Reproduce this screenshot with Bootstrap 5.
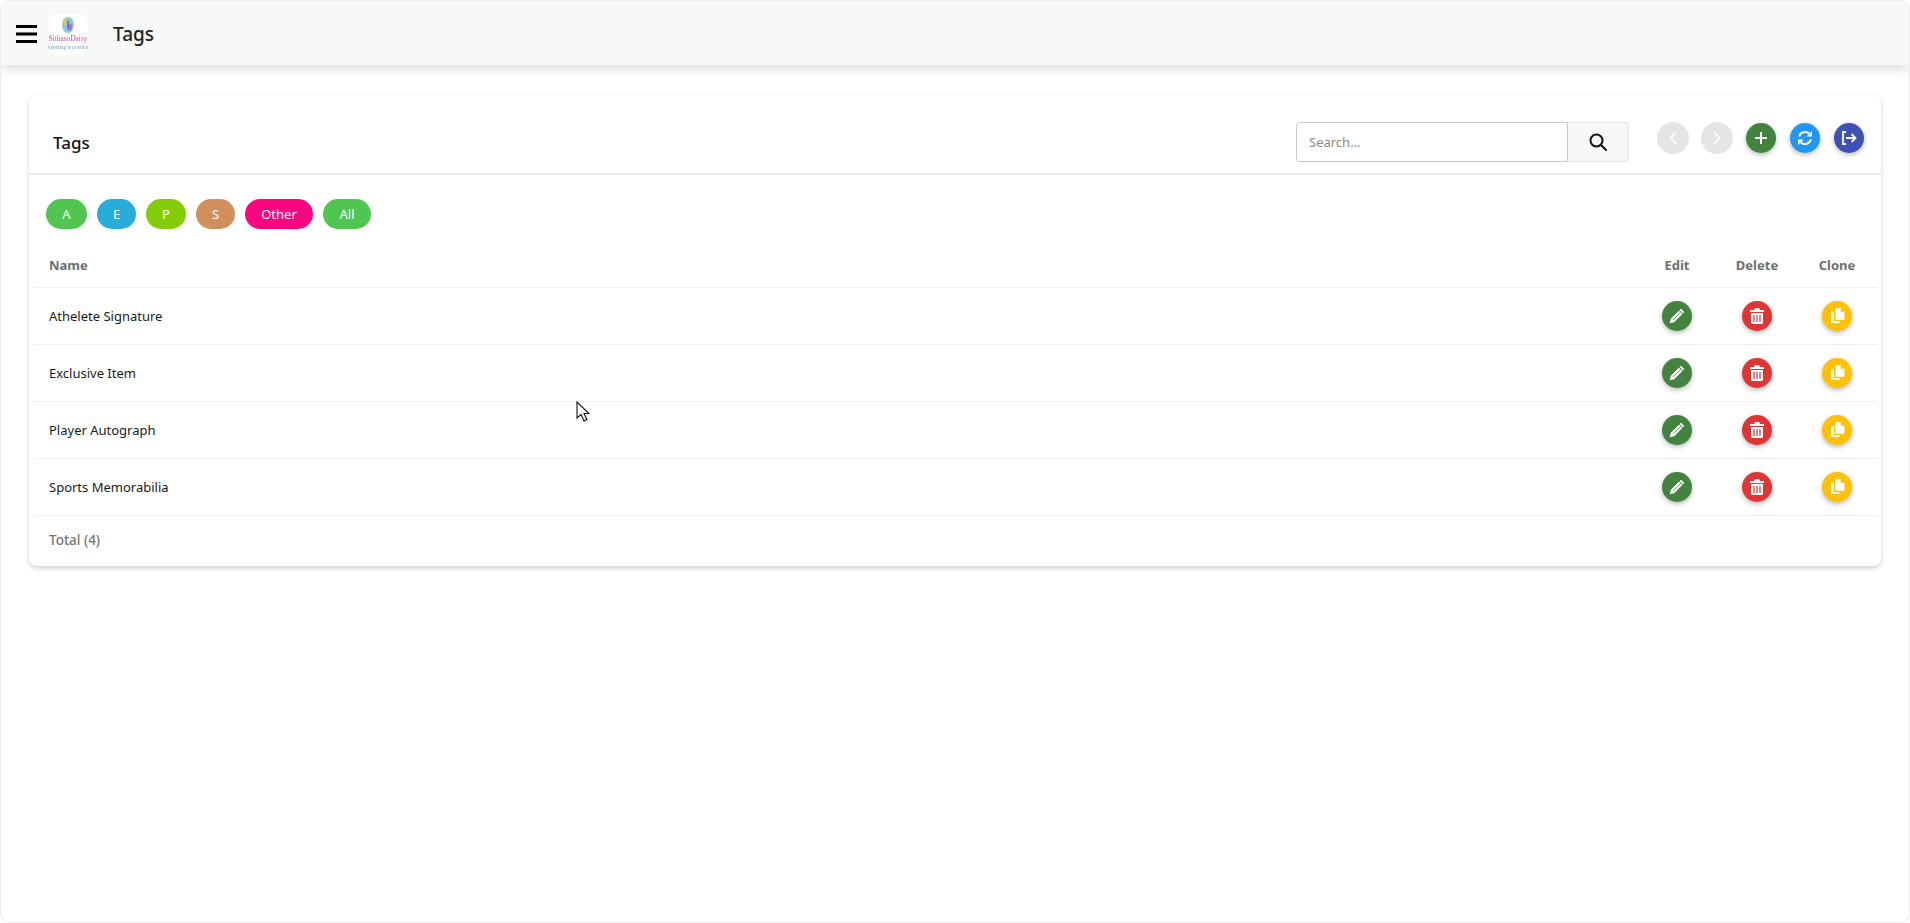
<!DOCTYPE html>
<html lang="en">
<head>
    <meta charset="UTF-8">
    <title>Tags</title>
    <link href="https://cdn.jsdelivr.net/npm/bootstrap@5.3.0/dist/css/bootstrap.min.css" rel="stylesheet">
    <style>
        html, body { height: 100%; }
        body {
            font-family: "Noto Sans", "Open Sans", sans-serif;
            color: #1a1a1a;
            background: #fff;
            font-size: 13px;
        }
        .app-frame {
            min-height: 100%;
            border: 1px solid #ececec;
            border-radius: 9px;
            overflow: hidden;
            position: relative;
        }
        .top-bar {
            height: 64px;
            background: #f8f8f8;
            box-shadow: 0 3px 12px rgba(0, 0, 0, .16);
            padding-left: 15px;
            padding-top: 1px;
        }
        .burger { width: 21px; height: 18px; display: block; }
        .logo-box {
            width: 40px;
            height: 40px;
            margin-left: 11px;
            background: #fff;
            border-radius: 9px;
        }
        .logo-box svg { filter: blur(.35px); }
        .bar-title { font-size: 19px; font-weight: 500; margin-left: 25px; padding-top: 2px; color: #222; }
        .main-card {
            margin: 30px 28px 0 28px;
            border: 0;
            border-radius: 8px;
            box-shadow: 0 2px 5px rgba(0, 0, 0, .2);
            height: 471px;
        }
        .card-top {
            height: 80px;
            border-bottom: 2px solid #e6e6e6;
            padding: 27px 17px 0 24px;
        }
        .card-name { font-size: 17px; font-weight: 500; line-height: 42px; color: #111; }
        .search-wrap { width: 333px; height: 40px; margin-right: 28px; flex: none; }
        .search-wrap input {
            flex: none;
            width: 272px;
            height: 40px;
            font-size: 13px;
            padding-left: 12px;
            border: 1px solid #c8c8c8;
            border-radius: 4px 0 0 4px;
            box-shadow: none;
        }
        .search-wrap input::placeholder { color: #8a8a8a; }
        .search-btn {
            flex: none;
            width: 61px;
            height: 40px;
            background: #f7f7f7;
            border: 1px solid #e4e4e4;
            border-left: 0;
            border-radius: 0 4px 4px 0;
        }
        .round-btn {
            width: 30px;
            height: 30px;
            border-radius: 50%;
            border: 0;
            padding: 0;
            display: inline-flex;
            align-items: center;
            justify-content: center;
            flex: none;
            box-shadow: 0 2px 5px rgba(0, 0, 0, .28);
        }
        .round-off { width: 32px; height: 32px; background: #e5e5e5; box-shadow: none; margin-right: -1px; }
        .round-off:first-child { margin-right: -2px; }
        .tool-row { gap: 14px; height: 32px; }
        .c-green { background: #43833f; }
        .c-blue { background: #2196f3; }
        .c-indigo { background: #3f51b5; }
        .c-red { background: #e03535; }
        .c-amber { background: #ffc107; }
        .chip-row { padding: 24px 0 0 17px; gap: 10px; }
        .chip {
            height: 30px;
            line-height: 30px;
            border-radius: 15px;
            color: #fff;
            text-align: center;
            font-size: 13px;
        }
        .chip-a { width: 41px; background: #50c550; }
        .chip-e { width: 39px; background: #27acdb; }
        .chip-p { width: 40px; background: #84cc07; }
        .chip-s { width: 39px; background: #d18f5c; }
        .chip-o { width: 68px; background: #fb0580; }
        .chip-all { width: 48px; background: #50c550; }
        .tag-grid {
            margin: 0 4px;
            width: calc(100% - 8px);
            table-layout: fixed;
            font-size: 13px;
        }
        .tag-grid th {
            height: 58px;
            padding: 16px 16px 0;
            color: #6f6f6f;
            font-weight: 700;
            border-bottom: 1px solid #f0f0f0;
            font-size: 13px;
        }
        .tag-grid td {
            height: 57px;
            padding: 3px 16px 0;
            border-bottom: 1px solid #f0f0f0;
            color: #1a1a1a;
            vertical-align: middle;
        }
        .tag-grid .col-act { width: 80px; padding: 0; text-align: center; }
        .tag-grid th.col-act { padding-top: 16px; }
        .tag-grid .round-btn { vertical-align: middle; }
        .total-line { padding: 14px 0 0 20px; color: #757575; font-weight: 500; font-size: 13.500px; }
        .mouse-arrow { position: absolute; left: 575px; top: 400px; width: 14px; height: 22px; }
    </style>
</head>
<body>

<div class="app-frame">
    <!-- top bar -->
    <div class="top-bar d-flex align-items-center">
        <svg class="burger" viewBox="0 0 21 18"><path d="M0 0h21v3H0zM0 7.500h21v3H0zM0 15h21v3H0z" fill="#000"/></svg>
        <div class="logo-box flex-shrink-0">
            <svg viewBox="0 0 40 40" width="40" height="40">
                <ellipse cx="20" cy="11" rx="6" ry="8" fill="#8cc7dd"/>
                <ellipse cx="18" cy="8" rx="2" ry="3" fill="#e2c35a"/>
                <ellipse cx="22" cy="13" rx="2" ry="3.500" fill="#d95fb4"/>
                <ellipse cx="20" cy="11" rx="1" ry="5" fill="#4f7fd0"/>
                <text x="20" y="27" font-size="7.400" text-anchor="middle" fill="#d9479f" font-family="Liberation Serif, serif">SithasoDaisy</text>
                <text x="20" y="35" font-size="5.200" text-anchor="middle" fill="#7ea0c4" font-family="Liberation Serif, serif">Anything is possible</text>
            </svg>
        </div>
        <div class="bar-title">Tags</div>
    </div>

    <!-- card -->
    <div class="card main-card">
        <div class="card-top d-flex align-items-start">
            <div class="card-name me-auto">Tags</div>
            <div class="search-wrap d-flex">
                <input class="form-control" type="text" placeholder="Search...">
                <button class="search-btn d-flex align-items-center justify-content-center" type="button">
                    <svg width="18" height="18" viewBox="0 0 18 18" fill="none" stroke="#111" stroke-width="2"><circle cx="7.500" cy="7.500" r="6"/><path d="M11.800 11.800 17 17" stroke-linecap="round"/></svg>
                </button>
            </div>
            <div class="tool-row d-flex align-items-center">
                <button class="round-btn round-off" type="button"><svg width="10" height="16" viewBox="0 0 10 16" fill="none" stroke="#fff" stroke-width="1.600"><path d="M8 2 2.500 8 8 14"/></svg></button>
                <button class="round-btn round-off" type="button"><svg width="10" height="16" viewBox="0 0 10 16" fill="none" stroke="#fff" stroke-width="1.600"><path d="M2 2l5.500 6L2 14"/></svg></button>
                <button class="round-btn c-green" type="button"><svg width="14" height="14" viewBox="0 0 14 14"><path d="M6 1h2v5h5v2H8v5H6V8H1V6h5z" fill="#fff"/></svg></button>
                <button class="round-btn c-blue" type="button"><svg width="16" height="16" viewBox="0 0 16 16"><path d="M2.200 6.500A6 6 0 0 1 12 3.600M13.800 9.500A6 6 0 0 1 4 12.400" fill="none" stroke="#fff" stroke-width="2"/><path d="M15 1v5.500H9.500zM1 15V9.500h5.500z" fill="#fff"/></svg></button>
                <button class="round-btn c-indigo" type="button"><svg width="16" height="14" viewBox="0 0 16 14" fill="none" stroke="#fff" stroke-width="1.800"><path d="M5 1H2v12h3"/><path d="M5 7h9M10.500 3l4 4-4 4"/></svg></button>
            </div>
        </div>

        <div class="chip-row d-flex">
            <div class="chip chip-a">A</div>
            <div class="chip chip-e">E</div>
            <div class="chip chip-p">P</div>
            <div class="chip chip-s">S</div>
            <div class="chip chip-o">Other</div>
            <div class="chip chip-all">All</div>
        </div>

        <table class="tag-grid" id="tagTable">
            <thead>
            <tr><th>Name</th><th class="col-act">Edit</th><th class="col-act">Delete</th><th class="col-act">Clone</th></tr>
            </thead>
            <tbody></tbody>
        </table>
        <div class="total-line">Total (4)</div>
    </div>

    <!-- mouse pointer from the capture -->
    <svg class="mouse-arrow" viewBox="0 0 14 22"><path d="M1 1v16l4-3.500 3 6.500 3-1.500-3-6h5z" fill="#fff" stroke="#111" stroke-width="1.100"/></svg>
</div>

<script>
    const pencil = '<svg width="18" height="18" viewBox="0 0 16 16"><path d="M11.500 1.500 14.500 4.500 5.500 13.500 1.500 14.500 2.500 10.500z" fill="#fff"/><path d="M10 3l3 3" stroke="#43833f" stroke-width=".9"/><path d="M4.500 11.500l6.500-6.500" stroke="#43833f" stroke-width=".7"/></svg>';
    const trash = '<svg width="14" height="16" viewBox="0 0 14 16"><path d="M5 0h4l1 2h4v2H0V2h4zM1 5h12v9.500a1.500 1.500 0 0 1-1.500 1.500h-9A1.500 1.500 0 0 1 1 14.500z" fill="#fff"/><path d="M4 7v7M7 7v7M10 7v7" stroke="#e03535" stroke-width="1.200"/></svg>';
    const copy = '<svg width="17" height="17" viewBox="0 0 16 16"><path d="M6 1h5v3.500h3.500V12H6z" fill="#fff"/><path d="M4.500 4.500H2V15h8v-1.500H4.500z" fill="#fff"/></svg>';
    const tags = ['Athelete Signature', 'Exclusive Item', 'Player Autograph', 'Sports Memorabilia'];

    const tbody = document.querySelector('#tagTable tbody');
    tags.forEach(name => {
        tbody.innerHTML += `
            <tr>
                <td>${name}</td>
                <td class="col-act"><button class="round-btn c-green" type="button">${pencil}</button></td>
                <td class="col-act"><button class="round-btn c-red" type="button">${trash}</button></td>
                <td class="col-act"><button class="round-btn c-amber" type="button">${copy}</button></td>
            </tr>`;
    });
</script>
<script src="https://cdn.jsdelivr.net/npm/bootstrap@5.3.0/dist/js/bootstrap.bundle.min.js"></script>
</body>
</html>
